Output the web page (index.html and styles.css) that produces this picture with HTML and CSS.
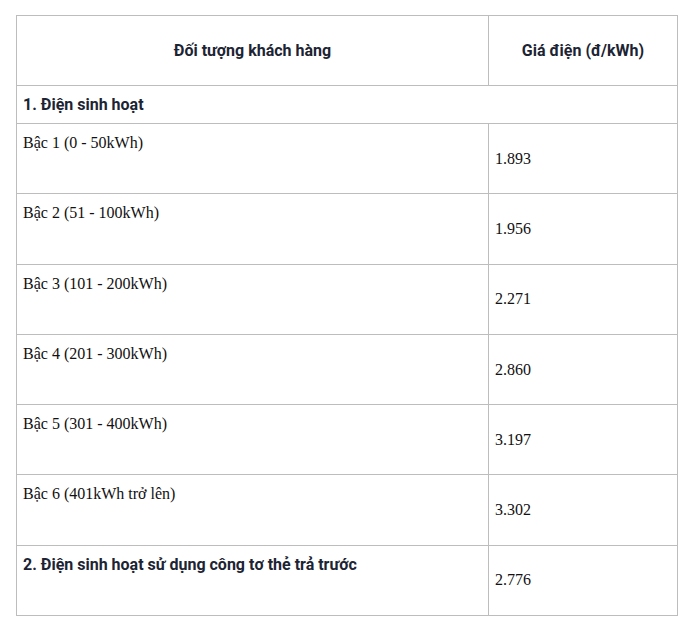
FILE: index.html
```html
<!DOCTYPE html>
<html lang="vi">
<head>
<meta charset="utf-8">
<link rel="stylesheet" href="styles.css">
</head>
<body>
<div class="wrap">
<table class="price">
  <colgroup><col class="c1"><col class="c2"></colgroup>
  <tr class="head">
    <th>Đối tượng khách hàng</th>
    <th>Giá điện (đ/kWh)</th>
  </tr>
  <tr class="group">
    <td colspan="2">1. Điện sinh hoạt</td>
  </tr>
  <tr class="row"><td class="name">Bậc 1 (0 - 50kWh)</td><td class="val">1.893</td></tr>
  <tr class="row"><td class="name">Bậc 2 (51 - 100kWh)</td><td class="val">1.956</td></tr>
  <tr class="row"><td class="name">Bậc 3 (101 - 200kWh)</td><td class="val">2.271</td></tr>
  <tr class="row"><td class="name">Bậc 4 (201 - 300kWh)</td><td class="val">2.860</td></tr>
  <tr class="row"><td class="name">Bậc 5 (301 - 400kWh)</td><td class="val">3.197</td></tr>
  <tr class="row"><td class="name">Bậc 6 (401kWh trở lên)</td><td class="val">3.302</td></tr>
  <tr class="row"><td class="name bold">2. Điện sinh hoạt sử dụng công tơ thẻ trả trước</td><td class="val">2.776</td></tr>
</table>
</div>
</body>
</html>
```
FILE: styles.css
```css
html, body { margin: 0; padding: 0; background: #fff; }
.wrap { padding: 15px 0 0 16px; }
.price {
  border-collapse: collapse;
  width: 661px;
  table-layout: fixed;
  font-family: "Liberation Serif", serif;
  font-size: 16px;
  color: #111;
}
.c1 { width: 472px; }
.c2 { width: 189px; }
.price th, .price td {
  border: 1px solid #bdbdbd;
  padding: 0 6px;
}
.head { height: 70px; }
.head th {
  font-family: Roboto, "Noto Sans", sans-serif;
  font-weight: 700;
  font-size: 16px;
  color: #1c2433;
  text-align: center;
  vertical-align: middle;
}
.group { height: 38px; }
.group td {
  font-family: Roboto, "Noto Sans", sans-serif;
  font-weight: 700;
  font-size: 16px;
  color: #1c2433;
  vertical-align: middle;
}
.row { height: 70.3px; }
.name { vertical-align: top; padding-top: 10px !important; }
.name.bold {
  font-family: Roboto, "Noto Sans", sans-serif;
  font-weight: 700;
  color: #1c2433;
  padding-top: 9px !important;
}
.val { vertical-align: middle; }
```
